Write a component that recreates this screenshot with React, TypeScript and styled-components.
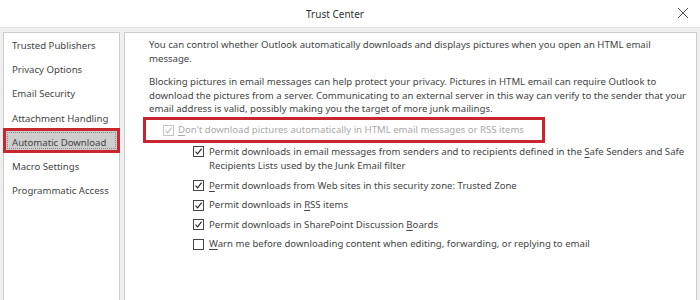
import React from 'react';
import styled, {createGlobalStyle} from 'styled-components';

const GlobalStyle = createGlobalStyle`
  html, body {
    margin: 0;
    padding: 0;
    background: #efefef;
  }
  body {
    font-family: "Noto Sans", "Open Sans", sans-serif;
  }
`;

const Window = styled.div`
  width: 700px;
  height: 300px;
  overflow: hidden;
  background: #efefef;
  display: flex;
  flex-direction: column;
  color: #444;
  font-size: 9.6px;
`;

const TitleBar = styled.div`
  position: relative;
  height: 27px;
  flex-shrink: 0;
  background: #fff;
  display: flex;
  align-items: center;
  justify-content: center;
  padding-right: 30px;
  font-size: 10px;
  color: #333;
  border-bottom: 1px solid #e2e2e2;
`;

const Close = styled.div`
  position: absolute;
  right: 11px;
  top: 7px;
  width: 12px;
  height: 12px;
`;

const Body = styled.div`
  flex: 1;
  display: flex;
  gap: 4px;
  padding: 4px 3px 0 3px;
  min-height: 0;
`;

const Sidebar = styled.div`
  width: 115px;
  flex-shrink: 0;
  background: #fff;
  border: 1px solid #cbcbcb;
  border-bottom: none;
  padding-top: 1px;
`;

const NavItem = styled.div<{$active?: boolean}>`
  height: 24.2px;
  line-height: 24.2px;
  padding-left: 8px;
  white-space: nowrap;
  color: #444;
  ${p => p.$active && `
    margin: -2.5px -1px 0;
    height: 25px;
    line-height: 29px;
    padding-left: 9px;
    background: #cdcdcd;
    box-shadow: inset 0 0 0 3px #c9252f, inset 0 0 0 4px #cdcdcd;
    outline: 1px dotted #8a8a8a;
    outline-offset: -5px;
    position: relative;
    & + div { margin-top: 1.7px; }
  `}
`;

const Panel = styled.div`
  flex: 1;
  min-width: 0;
  overflow: hidden;
  background: #fff;
  border: 1px solid #cbcbcb;
  border-bottom: none;
  padding: 5px 24px 0 24px;
`;

const Para = styled.p`
  margin: 0 0 10px 0;
  line-height: 13.5px;
  white-space: nowrap;
`;

const Highlight = styled.div`
  margin: -8.8px 127px 0 -6px;
  width: 402px;
  height: 26px;
  border: 3px solid #c9252f;
  box-sizing: border-box;
  display: flex;
  align-items: center;
  padding-left: 17px;
  gap: 4px;
  white-space: nowrap;
  color: #a8a8a8;
`;

const Options = styled.div`
  padding: 1.8px 0 0 44px;
  display: flex;
  flex-direction: column;
  gap: 5px;
  white-space: nowrap;
`;

const Option = styled.div`
  display: flex;
  align-items: flex-start;
  gap: 5px;
  line-height: 14.5px;
`;

const Box = styled.span<{$disabled?: boolean}>`
  flex-shrink: 0;
  width: 11px;
  height: 11px;
  margin-top: 1.8px;
  box-sizing: border-box;
  border: 1px solid ${p => (p.$disabled ? '#c4c4c4' : '#444')};
  background: #fff;
  display: flex;
  align-items: center;
  justify-content: center;
`;

const U = styled.span`
  text-decoration: underline;
  text-underline-offset: 1.5px;
`;

function Check({checked, disabled}: {checked?: boolean; disabled?: boolean}) {
  return (
    <Box $disabled={disabled}>
      {checked && (
        <svg width="9" height="9" viewBox="0 0 9 9">
          <path d="M1.5 4.6 L3.6 6.8 L7.6 1.6" fill="none"
                stroke={disabled ? '#bdbdbd' : '#222'} strokeWidth="1.1"/>
        </svg>
      )}
    </Box>
  );
}

const navItems = [
  'Trusted Publishers',
  'Privacy Options',
  'Email Security',
  'Attachment Handling',
  'Automatic Download',
  'Macro Settings',
  'Programmatic Access',
];

export default function App() {
  return (
    <>
      <GlobalStyle/>
      <Window>
        <TitleBar>
          Trust Center
          <Close>
            <svg width="12" height="12" viewBox="0 0 12 12">
              <path d="M1 1 L11 11 M11 1 L1 11" stroke="#555" strokeWidth="1"/>
            </svg>
          </Close>
        </TitleBar>
        <Body>
          <Sidebar>
            {navItems.map(n => (
              <NavItem key={n} $active={n === 'Automatic Download'}>{n}</NavItem>
            ))}
          </Sidebar>
          <Panel>
            <Para>
              You can control whether Outlook automatically downloads and displays pictures when you open an HTML email
              <br/>message.
            </Para>
            <Para>
              Blocking pictures in email messages can help protect your privacy. Pictures in HTML email can require Outlook to
              <br/>download the pictures from a server. Communicating to an external server in this way can verify to the sender that your
              <br/>email address is valid, possibly making you the target of more junk mailings.
            </Para>
            <Highlight>
              <Check checked disabled/>
              <span><U>D</U>on't download pictures automatically in HTML email messages or RSS items</span>
            </Highlight>
            <Options>
              <Option>
                <Check checked/>
                <span>
                  Permit downloads in email messages from senders and to recipients defined in the <U>S</U>afe Senders and Safe
                  <br/>Recipients Lists used by the Junk Email filter
                </span>
              </Option>
              <Option>
                <Check checked/>
                <span><U>P</U>ermit downloads from Web sites in this security zone: Trusted Zone</span>
              </Option>
              <Option>
                <Check checked/>
                <span>Permit downloads in <U>R</U>SS items</span>
              </Option>
              <Option>
                <Check checked/>
                <span>Permit downloads in SharePoint Discussion <U>B</U>oards</span>
              </Option>
              <Option>
                <Check/>
                <span><U>W</U>arn me before downloading content when editing, forwarding, or replying to email</span>
              </Option>
            </Options>
          </Panel>
        </Body>
      </Window>
    </>
  );
}
